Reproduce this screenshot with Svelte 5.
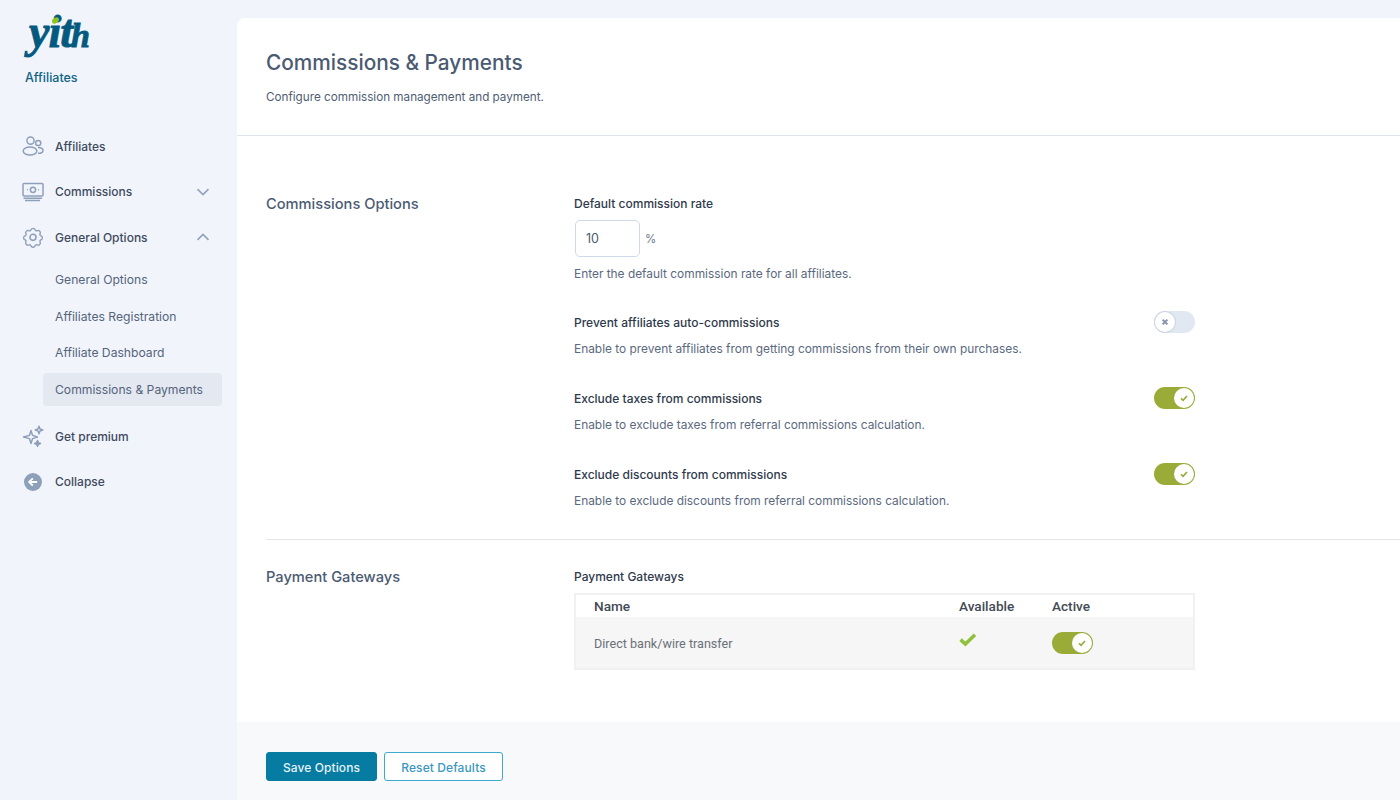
<script>
	const subItems = [
		{ label: 'General Options' },
		{ label: 'Affiliates Registration' },
		{ label: 'Affiliate Dashboard' },
		{ label: 'Commissions & Payments', active: true }
	];

	const toggles = [
		{
			label: 'Prevent affiliates auto-commissions',
			desc: 'Enable to prevent affiliates from getting commissions from their own purchases.',
			on: false
		},
		{
			label: 'Exclude taxes from commissions',
			desc: 'Enable to exclude taxes from referral commissions calculation.',
			on: true
		},
		{
			label: 'Exclude discounts from commissions',
			desc: 'Enable to exclude discounts from referral commissions calculation.',
			on: true
		}
	];
</script>

{#snippet toggle(on)}
	<span class="toggle" class:on>
		<span class="knob">
			{#if on}
				<svg width="10" height="10" viewBox="0 0 10 10" fill="none" stroke="#9aab38" stroke-width="1.7">
					<path d="M2 5.4 4.1 7.4 8 3" />
				</svg>
			{:else}
				<svg width="10" height="10" viewBox="0 0 10 10" fill="none" stroke="#8593ab" stroke-width="2">
					<path d="M2.6 2.6 7.4 7.4M7.4 2.6 2.6 7.4" />
				</svg>
			{/if}
		</span>
	</span>
{/snippet}

<div class="page">
	<aside class="sidebar">
		<div class="logo">
			<svg width="70" height="44" viewBox="0 0 70 44">
				<text x="4" y="31" class="logo-word">yit<tspan class="logo-h" dx="-1">h</tspan></text>
				<ellipse cx="30.5" cy="4.5" rx="3.8" ry="2.600" transform="rotate(-35 30.5 4.5)" fill="#8fc31f" />
			</svg>
			<span class="logo-name">Affiliates</span>
		</div>

		<nav class="menu">
			<div class="item">
				<svg class="icon" width="22" height="22" viewBox="0 0 22 22" fill="none" stroke="#8e9fba" stroke-width="1.5">
					<circle cx="8.5" cy="5.600" r="3.600" />
					<circle cx="16.200" cy="8" r="2.600" />
					<ellipse cx="8" cy="16" rx="6.800" ry="4" />
					<path d="M16 12.400c3 0 5 1.200 5 3s-2 2.900-5 2.900" />
				</svg>
				<span>Affiliates</span>
			</div>
			<div class="item">
				<svg class="icon" width="22" height="22" viewBox="0 0 22 22" fill="none" stroke="#8e9fba" stroke-width="1.5">
					<rect x="1" y="2.500" width="20" height="12.500" rx="1" />
					<circle cx="11" cy="8.800" r="2.600" />
					<path d="M5 8.800h.9M16.100 8.800h.9" />
					<path d="M1.500 17.200h18.600M3 19.600h15" />
				</svg>
				<span>Commissions</span>
				<svg class="chev" width="14" height="8" viewBox="0 0 14 8" fill="none" stroke="#94a3bd" stroke-width="1.700">
					<path d="M1.500 1.200 7 6.600 12.500 1.200" />
				</svg>
			</div>
			<div class="item">
				<svg class="icon" width="22" height="22" viewBox="0 0 24 24" fill="none" stroke="#8e9fba" stroke-width="1.700" stroke-linejoin="round">
					<path d="M9.600 3.100c.5-2 4.300-2 4.800 0 .3 1.300 1.800 1.900 2.900 1.200 1.800-1.100 4.500 1.600 3.400 3.400-.7 1.100-.1 2.600 1.200 2.900 2 .5 2 4.300 0 4.800-1.300.3-1.900 1.800-1.200 2.900 1.100 1.800-1.600 4.500-3.400 3.400-1.100-.7-2.600-.1-2.900 1.200-.5 2-4.300 2-4.800 0-.3-1.300-1.800-1.900-2.900-1.200-1.800 1.100-4.500-1.600-3.400-3.400.7-1.100.1-2.600-1.200-2.900-2-.5-2-4.300 0-4.800 1.300-.3 1.900-1.800 1.200-2.900C2.400 5.900 5.100 3.200 6.900 4.300c1.100.7 2.400.1 2.700-1.200Z" transform="translate(1.200 1.200) scale(.9)" />
					<circle cx="12" cy="12.400" r="3.300" />
				</svg>
				<span>General Options</span>
				<svg class="chev" width="14" height="8" viewBox="0 0 14 8" fill="none" stroke="#94a3bd" stroke-width="1.700">
					<path d="M1.500 6.800 7 1.400 12.500 6.800" />
				</svg>
			</div>
			<div class="sub">
				{#each subItems as sub}
					<div class="sub-item" class:active={sub.active}>{sub.label}</div>
				{/each}
			</div>
			<div class="item premium">
				<svg class="icon" width="22" height="22" viewBox="0 0 22 22" fill="none" stroke="#8e9fba" stroke-width="1.500" stroke-linejoin="round">
					<path d="M9 5.500 10.600 10.400 15.500 12 10.600 13.600 9 18.500 7.400 13.600 1.500 12 7.400 10.400Z" />
					<path d="M17 1.200 18 4 20.800 5 18 6 17 8.800 16 6 13.200 5 16 4Z" />
					<path d="M15.500 15.500 16.400 17.600 18.500 18.500 16.400 19.400 15.500 21.300 14.600 19.400 12.600 18.500 14.600 17.600Z" fill="#8e9fba" />
				</svg>
				<span>Get premium</span>
			</div>
			<div class="item">
				<svg class="icon" width="22" height="22" viewBox="0 0 22 22">
					<circle cx="11" cy="11" r="9" fill="#8e9fba" />
					<path d="M15.200 11H7.500M10.800 7.400 7.200 11l3.600 3.600" fill="none" stroke="#fff" stroke-width="1.900" />
				</svg>
				<span>Collapse</span>
			</div>
		</nav>
	</aside>

	<main class="panel">
		<header class="head">
			<h1>Commissions &amp; Payments</h1>
			<p>Configure commission management and payment.</p>
		</header>

		<div class="body">
			<section class="section first">
				<h2>Commissions Options</h2>
				<div class="fields">
					<div class="field rate">
						<span class="label">Default commission rate</span>
						<div class="rate-row">
							<input class="rate-input" type="text" value="10" readonly />
							<span class="unit">%</span>
						</div>
						<p class="desc">Enter the default commission rate for all affiliates.</p>
					</div>
					{#each toggles as t}
						<div class="field">
							<div class="label-row">
								<span class="label">{t.label}</span>
								{@render toggle(t.on)}
							</div>
							<p class="desc">{t.desc}</p>
						</div>
					{/each}
				</div>
			</section>

			<section class="section second">
				<h2>Payment Gateways</h2>
				<div class="fields">
					<span class="label">Payment Gateways</span>
					<div class="table">
						<div class="row head-row">
							<span class="c-name">Name</span>
							<span class="c-avail">Available</span>
							<span class="c-active">Active</span>
						</div>
						<div class="row data-row">
							<span class="c-name">Direct bank/wire transfer</span>
							<span class="c-avail">
								<svg width="18" height="14" viewBox="0 0 18 14" fill="none" stroke="#8fc13f" stroke-width="3.600">
									<path d="M1.600 6.600 6.400 11 16 1.800" />
								</svg>
							</span>
							<span class="c-active">{@render toggle(true)}</span>
						</div>
					</div>
				</div>
			</section>
		</div>

		<footer class="foot">
			<button class="btn primary">Save Options</button>
			<button class="btn outline">Reset Defaults</button>
		</footer>
	</main>
</div>

<style>
	:global(body) {
		margin: 0;
		background: #f1f5fb;
	}

	.page {
		display: flex;
		height: 800px;
		overflow: hidden;
		font-family: Inter, 'Liberation Sans', sans-serif;
		color: #4b5a73;
		background: #f1f5fb;
	}

	.sidebar {
		width: 237px;
		flex-shrink: 0;
		padding-top: 16px;
		box-sizing: border-box;
	}

	.logo {
		display: flex;
		flex-direction: column;
		padding-left: 25px;
	}

	.logo svg {
		overflow: visible;
	}

	.logo-word {
		font-family: 'Liberation Serif', serif;
		font-style: italic;
		font-weight: 700;
		font-size: 46px;
		letter-spacing: -1px;
		fill: #04597f;
		stroke: #04597f;
		stroke-width: 0.9px;
	}

	.logo-h {
		font-size: 34px;
	}

	.logo-name {
		font-size: 12.500px;
		font-weight: 500;
		color: #0f6385;
		margin-top: 10px;
		line-height: 16px;
	}

	.menu {
		margin-top: 37.500px;
		padding-left: 22px;
		padding-right: 15px;
	}

	.item {
		display: flex;
		align-items: center;
		height: 45.500px;
		font-size: 12px;
		font-weight: 500;
		color: #3f4a5f;
	}

	.icon {
		margin-right: 11px;
		flex-shrink: 0;
	}

	.chev {
		margin-left: auto;
		margin-right: 12px;
	}

	.sub {
		margin-left: 21px;
		margin-top: 3px;
	}

	.sub-item {
		height: 33px;
		margin-bottom: 3.500px;
		padding-left: 12px;
		display: flex;
		align-items: center;
		font-size: 12.150px;
		font-weight: 400;
		color: #55647c;
		border-radius: 4px;
	}

	.sub-item.active {
		background: #e3e8f1;
		margin-bottom: 0;
	}

	.premium {
		margin-top: 8px;
	}

	.panel {
		flex: 1;
		margin-top: 18px;
		background: #fff;
		border-top-left-radius: 8px;
		display: flex;
		flex-direction: column;
		min-width: 0;
	}

	.head {
		height: 118px;
		box-sizing: border-box;
		padding: 30px 29px 0;
		border-bottom: 1px solid #dfe4ea;
	}

	h1 {
		margin: 0;
		padding-top: 1px;
		font-size: 20.800px;
		font-weight: 500;
		line-height: 28px;
		color: #4b5a73;
	}

	.head p {
		margin: 12px 0 0;
		font-size: 11.700px;
		line-height: 16px;
		color: #4f5d74;
	}

	.body {
		flex: 1;
		padding-left: 29px;
	}

	.section {
		display: grid;
		grid-template-columns: 308px 621px;
	}

	.section.first {
		padding-top: 58px;
		height: 404px;
		box-sizing: border-box;
		border-bottom: 1px solid #e2e6eb;
	}

	.section.second {
		padding-top: 28px;
	}

	h2 {
		margin: 0;
		padding-top: 1px;
		font-size: 14.650px;
		font-weight: 500;
		line-height: 18px;
		color: #4b5a73;
	}

	.second h2 {
		padding-top: 0;
	}

	.second .fields {
		display: flex;
		flex-direction: column;
	}

	.label-row {
		display: flex;
		justify-content: space-between;
		align-items: center;
		height: 22px;
	}

	.label {
		padding-top: 1px;
		font-size: 12px;
		font-weight: 500;
		line-height: 18px;
		color: #2f3a4d;
	}

	.label-row .label {
		padding-top: 2px;
	}

	.second .label {
		padding-top: 0;
	}

	.field {
		margin-bottom: 29px;
	}

	.field.rate {
		margin-bottom: 27.500px;
	}

	.rate .label {
		display: block;
	}

	.rate-row {
		display: flex;
		align-items: center;
		margin-top: 7px;
		padding-left: 1px;
	}

	.rate-input {
		width: 65px;
		height: 37px;
		box-sizing: border-box;
		border: 1px solid #ced9ea;
		border-radius: 5px;
		padding: 0 10px;
		font: 400 12.500px Inter, sans-serif;
		color: #4b5a73;
		background: #fff;
		outline: none;
	}

	.unit {
		margin-left: 5px;
		font-size: 11.500px;
		color: #6b788e;
	}

	.desc {
		margin: 7px 0 0;
		font-size: 11.900px;
		line-height: 18px;
		color: #5b6980;
	}

	.rate .desc {
		margin-top: 8px;
	}

	.toggle {
		display: inline-block;
		position: relative;
		width: 41px;
		height: 22px;
		border-radius: 11px;
		background: #e2e8f1;
		flex-shrink: 0;
	}

	.toggle.on {
		background: #9bab37;
	}

	.knob {
		position: absolute;
		top: 1px;
		left: 1px;
		width: 20px;
		height: 20px;
		border-radius: 50%;
		background: #fff;
		display: flex;
		align-items: center;
		justify-content: center;
		box-shadow: 0 0 0 1px #ccd5e3;
	}

	.on .knob {
		left: 20px;
		box-shadow: none;
	}

	.table {
		margin-top: 7px;
		border: 2px solid #f1f1f1;
		box-sizing: border-box;
		width: 621px;
		height: 77px;
		font-family: Roboto, 'Liberation Sans', sans-serif;
	}

	.row {
		display: flex;
		padding-left: 18px;
	}

	.head-row {
		height: 22px;
		align-items: center;
		font-size: 13.600px;
		font-weight: 500;
		color: #444a55;
	}

	.data-row {
		height: 51px;
		padding-top: 15px;
		box-sizing: border-box;
		background: #f6f6f6;
		font-size: 12.600px;
		color: #6b7078;
		align-items: flex-start;
	}

	.data-row .c-name {
		line-height: 22px;
		padding-top: 1px;
	}

	.c-name {
		width: 365px;
	}

	.c-avail {
		width: 93px;
	}

	.data-row .c-avail {
		line-height: 0;
		padding-top: 1px;
	}

	.btn {
		height: 29px;
		box-sizing: border-box;
		border-radius: 3px;
		font: 500 12px Inter, sans-serif;
		letter-spacing: 0.100px;
		padding: 1px 0 0;
	}

	.primary {
		width: 111px;
		background: #077ca3;
		border: 1px solid #077ca3;
		color: #e6f2f6;
	}

	.outline {
		width: 119px;
		margin-left: 7px;
		background: #fff;
		border: 1px solid #3da9cf;
		color: #3a97bf;
	}

	.foot {
		height: 78px;
		box-sizing: border-box;
		padding: 30px 29px 0;
		background: #f8f9fb;
		display: flex;
		align-items: flex-start;
	}
</style>
